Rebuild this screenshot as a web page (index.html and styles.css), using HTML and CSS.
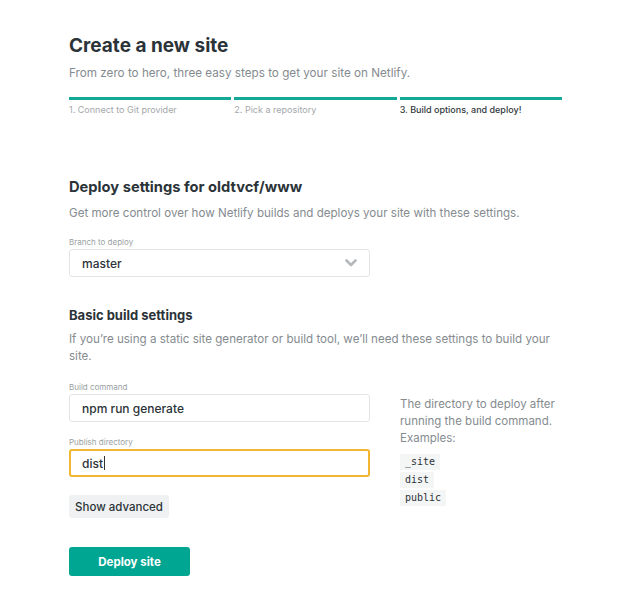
FILE: index.html
```html
<!DOCTYPE html>
<html>
<head>
<meta charset="utf-8">
<link rel="stylesheet" href="styles.css">
</head>
<body>
<div class="page">
  <h1 class="title">Create a new site</h1>
  <p class="subtitle">From zero to hero, three easy steps to get your site on Netlify.</p>
  <ol class="steps">
    <li class="step">1. Connect to Git provider</li>
    <li class="step">2. Pick a repository</li>
    <li class="step active">3. Build options, and deploy!</li>
  </ol>

  <h2 class="section-title">Deploy settings for oldtvcf/www</h2>
  <p class="desc">Get more control over how Netlify builds and deploys your site with these settings.</p>

  <div class="field">
    <label class="label">Branch to deploy</label>
    <div class="select">
      <span>master</span>
      <svg class="chev" width="12" height="8" viewBox="0 0 12 8"><path d="M1.5 1.5 L6 6 L10.5 1.5" fill="none" stroke="#b5b9bb" stroke-width="2.6" stroke-linecap="round" stroke-linejoin="round"/></svg>
    </div>
  </div>

  <h3 class="sub-title">Basic build settings</h3>
  <p class="desc wrap">If you’re using a static site generator or build tool, we’ll need these settings to build your site.</p>

  <div class="build-grid">
    <div class="build-form">
      <div class="field small">
        <label class="label">Build command</label>
        <div class="input">npm run generate</div>
      </div>
      <div class="field small">
        <label class="label">Publish directory</label>
        <div class="input focus">dist<span class="caret"></span></div>
      </div>
      <button class="btn-advanced">Show advanced</button>
      <button class="btn-deploy">Deploy site</button>
    </div>
    <div class="help">
      <p class="help-text">The directory to deploy after running the build command. Examples:</p>
      <code class="chip">_site</code>
      <code class="chip">dist</code>
      <code class="chip">public</code>
    </div>
  </div>
</div>
</body>
</html>
```
FILE: styles.css
```css
* { box-sizing: border-box; }
body {
  margin: 0;
  background: #fff;
  font-family: Inter, "Liberation Sans", Arial, sans-serif;
  color: #2d3438;
}
.page {
  width: 493px;
  margin-left: 69px;
  padding-top: 34px;
}
.title {
  margin: 0;
  font-size: 19px;
  line-height: 24px;
  font-weight: 700;
  color: #2b3338;
}
.subtitle {
  margin: 7px 0 0;
  font-size: 11.7px;
  line-height: 16px;
  color: #858b8f;
}
.steps {
  list-style: none;
  margin: 16px 0 0;
  padding: 0;
  display: flex;
  gap: 3px;
}
.step {
  flex: 1;
  border-top: 3px solid #13a898;
  padding-top: 4px;
  font-size: 9px;
  line-height: 12px;
  color: #a3a8ab;
}
.step.active { color: #30383c; font-weight: 500; }
.section-title {
  margin: 61px 0 0;
  font-size: 14.7px;
  line-height: 20px;
  font-weight: 700;
  color: #2b3338;
}
.desc {
  margin: 8px 0 0;
  font-size: 11.6px;
  line-height: 17px;
  color: #858b8f;
}
.desc.wrap { margin-top: 7px; }
.field { margin-top: 15px; width: 301px; }
.label {
  display: block;
  font-size: 8px;
  line-height: 10px;
  color: #9a9fa2;
  margin-bottom: 2px;
}
.select, .input {
  height: 28px;
  border: 1px solid #e2e4e5;
  border-radius: 3px;
  padding: 0 12px;
  display: flex;
  align-items: center;
  justify-content: space-between;
  font-size: 12px;
  font-weight: 500;
  color: #2b3338;
}
.input { justify-content: flex-start; }
.input.focus { border: 2px solid #f2b632; padding-left: 11px; }
.caret { display: inline-block; width: 1px; height: 14px; background: #333; margin-left: 1px; }
.sub-title {
  margin: 29px 0 0;
  font-size: 13px;
  line-height: 18px;
  font-weight: 700;
  color: #2b3338;
}
.build-grid {
  display: flex;
  gap: 30px;
  margin-top: 9px;
}
.build-form { width: 301px; flex: none; display: flex; flex-direction: column; align-items: flex-start; }
.build-form .field { margin-top: 15px; }
.build-form .field:first-child { margin-top: 8px; }
.btn-advanced {
  margin-top: 18px;
  border: 0;
  border-radius: 3px;
  background: #eff1f2;
  font-family: inherit;
  font-size: 11.5px;
  font-weight: 500;
  color: #2b3338;
  height: 23px;
  padding: 0 6px;
  width: 100px;
}
.btn-deploy {
  margin-top: 29px;
  border: 0;
  border-radius: 3px;
  background: #00a692;
  color: #fff;
  font-family: inherit;
  font-weight: 700;
  font-size: 11.5px;
  height: 29px;
  width: 121px;
}
.help { padding-top: 22px; display: flex; flex-direction: column; align-items: flex-start; }
.help-text {
  margin: 0;
  font-size: 11.5px;
  line-height: 17px;
  color: #858b8f;
  width: 162px;
}
.chip {
  font-family: "DejaVu Sans Mono", monospace;
  font-size: 10px;
  line-height: 16px;
  background: #f4f5f5;
  color: #2b3338;
  padding: 0 5px;
  margin-top: 2px;
}
.help-text + .chip { margin-top: 7px; }
```
